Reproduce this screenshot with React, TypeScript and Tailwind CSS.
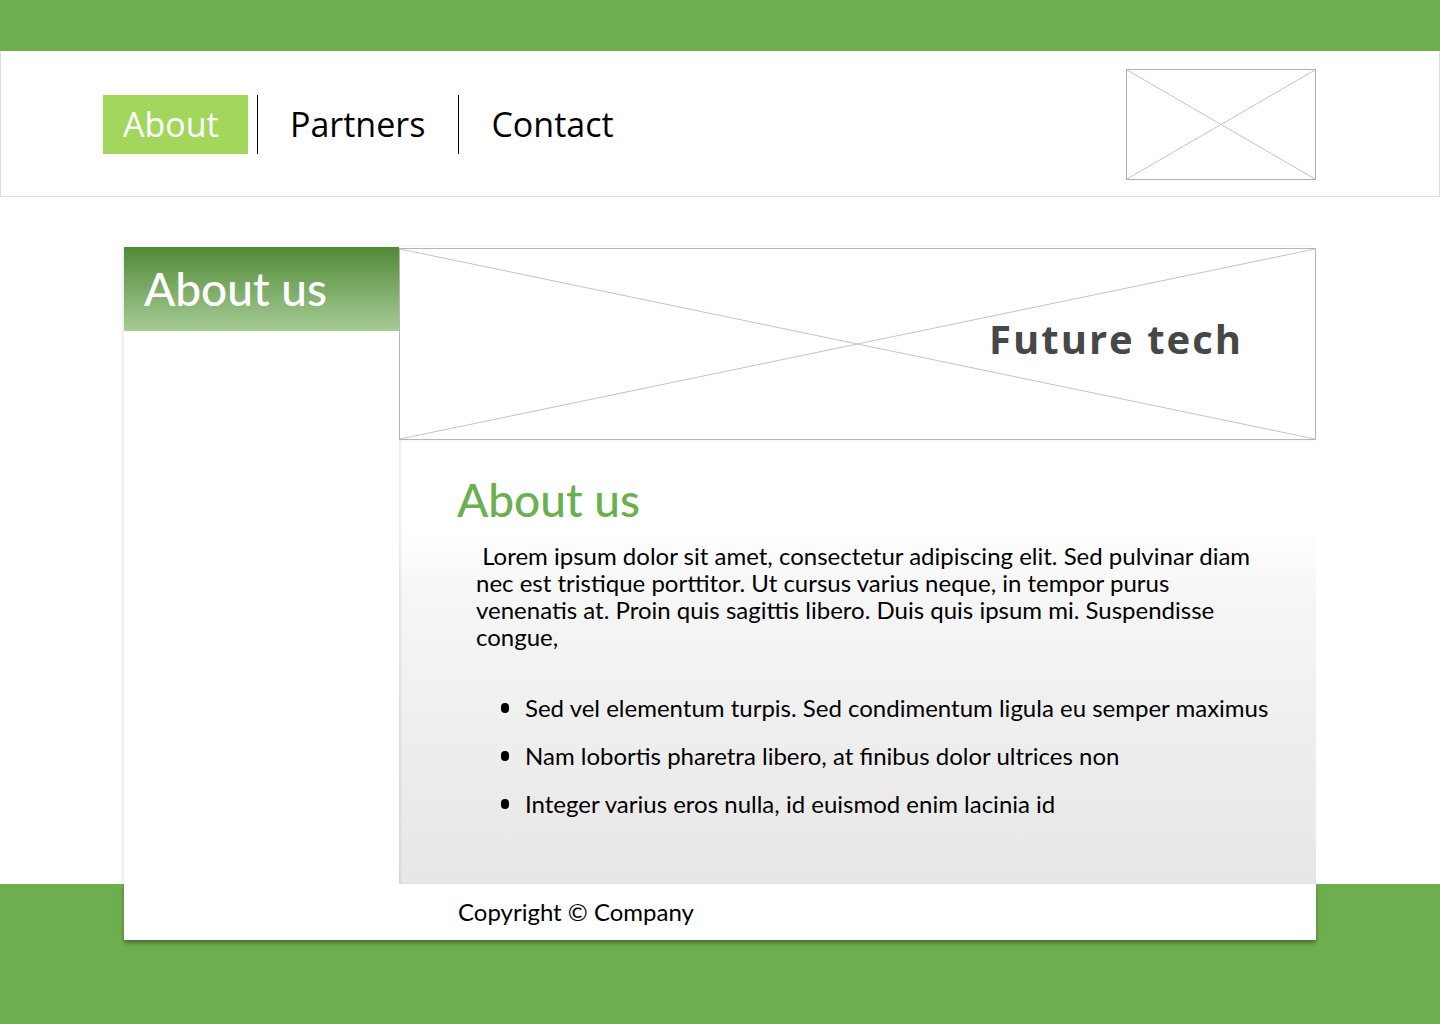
import React from 'react';

function Placeholder({ className }: { className?: string }) {
    return (
        <svg className={className} preserveAspectRatio="none" viewBox="0 0 100 100">
            <line x1="0" y1="0" x2="100" y2="100" stroke="#c4c4c4" strokeWidth="1" vectorEffect="non-scaling-stroke" />
            <line x1="100" y1="0" x2="0" y2="100" stroke="#c4c4c4" strokeWidth="1" vectorEffect="non-scaling-stroke" />
        </svg>
    );
}

const bullets = [
    'Sed vel elementum turpis. Sed condimentum ligula eu semper maximus',
    'Nam lobortis pharetra libero, at finibus dolor ultrices non',
    'Integer varius eros nulla, id euismod enim lacinia id',
];

export default function App() {
    return (
        <div className="min-h-[1024px] bg-white font-['Lato',sans-serif] text-black">
            {/* Top bar */}
            <div className="h-[51px] bg-[#6dae4f]" />

            {/* Header */}
            <header className="flex h-[146px] items-center justify-between border-x border-b border-[#dcdcdc] pl-[102px] pr-[123px]">
                <nav className="flex items-center pt-[2px] font-['Open_Sans',sans-serif] text-[34px] leading-none">
                    <a className="flex h-[59px] w-[145px] items-center bg-[#a3d65c] pb-[2px] pl-[20px] text-white">About</a>
                    <span className="ml-[9px] h-[59px] w-px bg-black" />
                    <a className="pb-[2px] pl-[32px] pr-[33px]">Partners</a>
                    <span className="h-[59px] w-px bg-black" />
                    <a className="pb-[2px] pl-[32px]">Contact</a>
                </nav>
                <div className="relative mt-[2px] h-[111px] w-[190px] border border-[#b0b0b0]">
                    <Placeholder className="absolute inset-0 h-full w-full" />
                </div>
            </header>

            {/* Main card */}
            <main className="pt-[50px]">
                <div className="mx-[124px] flex h-[637px] shadow-[-2px_0_3px_rgba(0,0,0,0.08)]">
                    {/* Sidebar */}
                    <aside className="w-[275px] shrink-0 bg-white">
                        <div className="flex h-[84px] items-center bg-[linear-gradient(to_bottom,#528a38,#a6cc95)] pl-[20px]">
                            <h2 className="text-[46px] font-medium leading-none text-white">About us</h2>
                        </div>
                    </aside>

                    {/* Right column */}
                    <section className="flex flex-1 flex-col">
                        <div className="relative mt-px flex h-[192px] items-center justify-end border border-[#b5b5b5] pr-[72px]">
                            <Placeholder className="absolute inset-0 h-full w-full" />
                            <h1 className="relative mb-[10px] font-['Open_Sans',sans-serif] text-[40px] font-bold leading-none tracking-[2px] text-[#474747]">
                                Future tech
                            </h1>
                        </div>
                        <div className="flex-1 bg-[linear-gradient(to_bottom,#ffffff_20%,#f6f6f6_35%,#e8e6e7_100%)] pl-[58px] pt-[37px] shadow-[inset_2px_0_2px_rgba(0,0,0,0.08)]">
                            <h2 className="text-[46px] font-medium leading-none text-[#6aaf50]">About us</h2>
                            <p className="ml-[19px] mt-[19px] w-[790px] text-[24px] leading-[27px]">
                                &nbsp;Lorem ipsum dolor sit amet, consectetur adipiscing elit. Sed pulvinar diam nec est tristique porttitor. Ut cursus varius neque, in tempor purus venenatis at. Proin quis sagittis libero. Duis quis ipsum mi. Suspendisse congue,
                            </p>
                            <ul className="ml-[44px] mt-[44px] flex flex-col gap-[21px]">
                                {bullets.map(b => (
                                    <li key={b} className="flex items-center gap-[16px] text-[24px] leading-[27px]">
                                        <span className="h-[10px] w-[8px] rounded-full bg-black" />
                                        {b}
                                    </li>
                                ))}
                            </ul>
                        </div>
                    </section>
                </div>
            </main>

            {/* Footer */}
            <footer className="h-[140px] bg-[#6dae4f]">
                <div className="mx-[124px] flex h-[56px] items-center bg-white pl-[334px] text-[24px] shadow-[0_3px_4px_rgba(0,0,0,0.35)]">
                    Copyright © Company
                </div>
            </footer>
        </div>
    );
}
